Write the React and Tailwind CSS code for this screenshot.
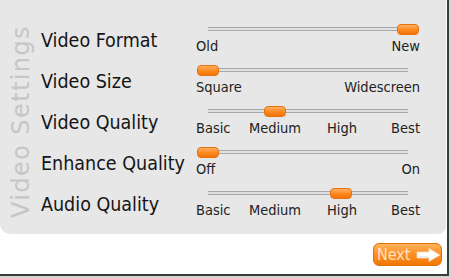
import React from 'react';

const settings = [
  { label: 'Video Format', value: 1, ticks: ['Old', 'New'] },
  { label: 'Video Size', value: 0, ticks: ['Square', 'Widescreen'] },
  { label: 'Video Quality', value: 1 / 3, ticks: ['Basic', 'Medium', 'High', 'Best'] },
  { label: 'Enhance Quality', value: 0, ticks: ['Off', 'On'] },
  { label: 'Audio Quality', value: 2 / 3, ticks: ['Basic', 'Medium', 'High', 'Best'] },
];

function Ticks({ ticks }) {
  if (ticks.length === 2) {
    return (
      <div className="flex justify-between">
        <span>{ticks[0]}</span>
        <span>{ticks[1]}</span>
      </div>
    );
  }
  return (
    <div className="grid grid-cols-[49px_60px_74px_41px]">
      <span>{ticks[0]}</span>
      <span className="text-center">{ticks[1]}</span>
      <span className="text-center">{ticks[2]}</span>
      <span className="text-right">{ticks[3]}</span>
    </div>
  );
}

function Slider({ value, ticks }) {
  return (
    <div className="w-[224px]">
      <div className="relative mt-[4px] h-[11px] mx-[12px]">
        <div className="absolute left-0 right-0 top-[3px] h-[4px] border-y border-[#a8a8a8] bg-[#e0e0e0]" />
        <div
          className="absolute top-0 h-[11px] w-[22px] -ml-[11px] rounded-[4px] border border-[#e8700c] bg-gradient-to-b from-[#ffb060] via-[#ff8a1e] to-[#f07408]"
          style={{ left: `${value * 100}%` }}
        />
      </div>
      <div className="mt-[3px] text-[14.5px] leading-[16px] text-[#222]">
        <Ticks ticks={ticks} />
      </div>
    </div>
  );
}

export default function App() {
  return (
    <div className="w-[452px] h-[278px] bg-[#d4d4d4] font-['DejaVu_Sans',sans-serif] [font-stretch:condensed]">
      <div className="w-[449px] h-[276px] bg-white border-r-2 border-b-2 border-[#3c3c3c] flex flex-col">
        {/* panel */}
        <div className="h-[234px] w-[446px] bg-[#e7e7e7] rounded-bl-[10px] rounded-br-[8px] flex">
          <div className="w-[41px] flex items-end justify-center pb-[16px]">
            <span className="[writing-mode:vertical-rl] rotate-180 text-[24px] leading-[26px] tracking-[1.4px] text-[#c6c6c6] [font-stretch:normal]">
              Video Settings
            </span>
          </div>
          <div className="pt-[20px] flex flex-col">
            {settings.map((s) => (
              <div key={s.label} className="h-[41px] flex">
                <div className="w-[155px] flex items-center text-[19.5px] text-[#151515] leading-[22px]">
                  {s.label}
                </div>
                <Slider value={s.value} ticks={s.ticks} />
              </div>
            ))}
          </div>
        </div>
        {/* footer */}
        <div className="flex justify-end pt-[9px] pr-[5px]">
          <button className="h-[23px] w-[69px] rounded-[6px] border border-[#e07000] bg-gradient-to-b from-[#ffb45a] via-[#ff8e20] to-[#f07800] flex items-center pl-[3px] gap-[5px]">
            <span className="text-[16px] leading-[18px] text-[#ffe3c4]">Next</span>
            <svg width="25" height="14" viewBox="0 0 25 14">
              <path d="M1 4 H13 V0.5 L24 7 L13 13.5 V10 H1 Z" fill="#ffffff" stroke="#f4d9c0" strokeWidth="0.8" />
              <path d="M1 8 H13 V10 H1 Z" fill="#ececec" />
            </svg>
          </button>
        </div>
      </div>
    </div>
  );
}
